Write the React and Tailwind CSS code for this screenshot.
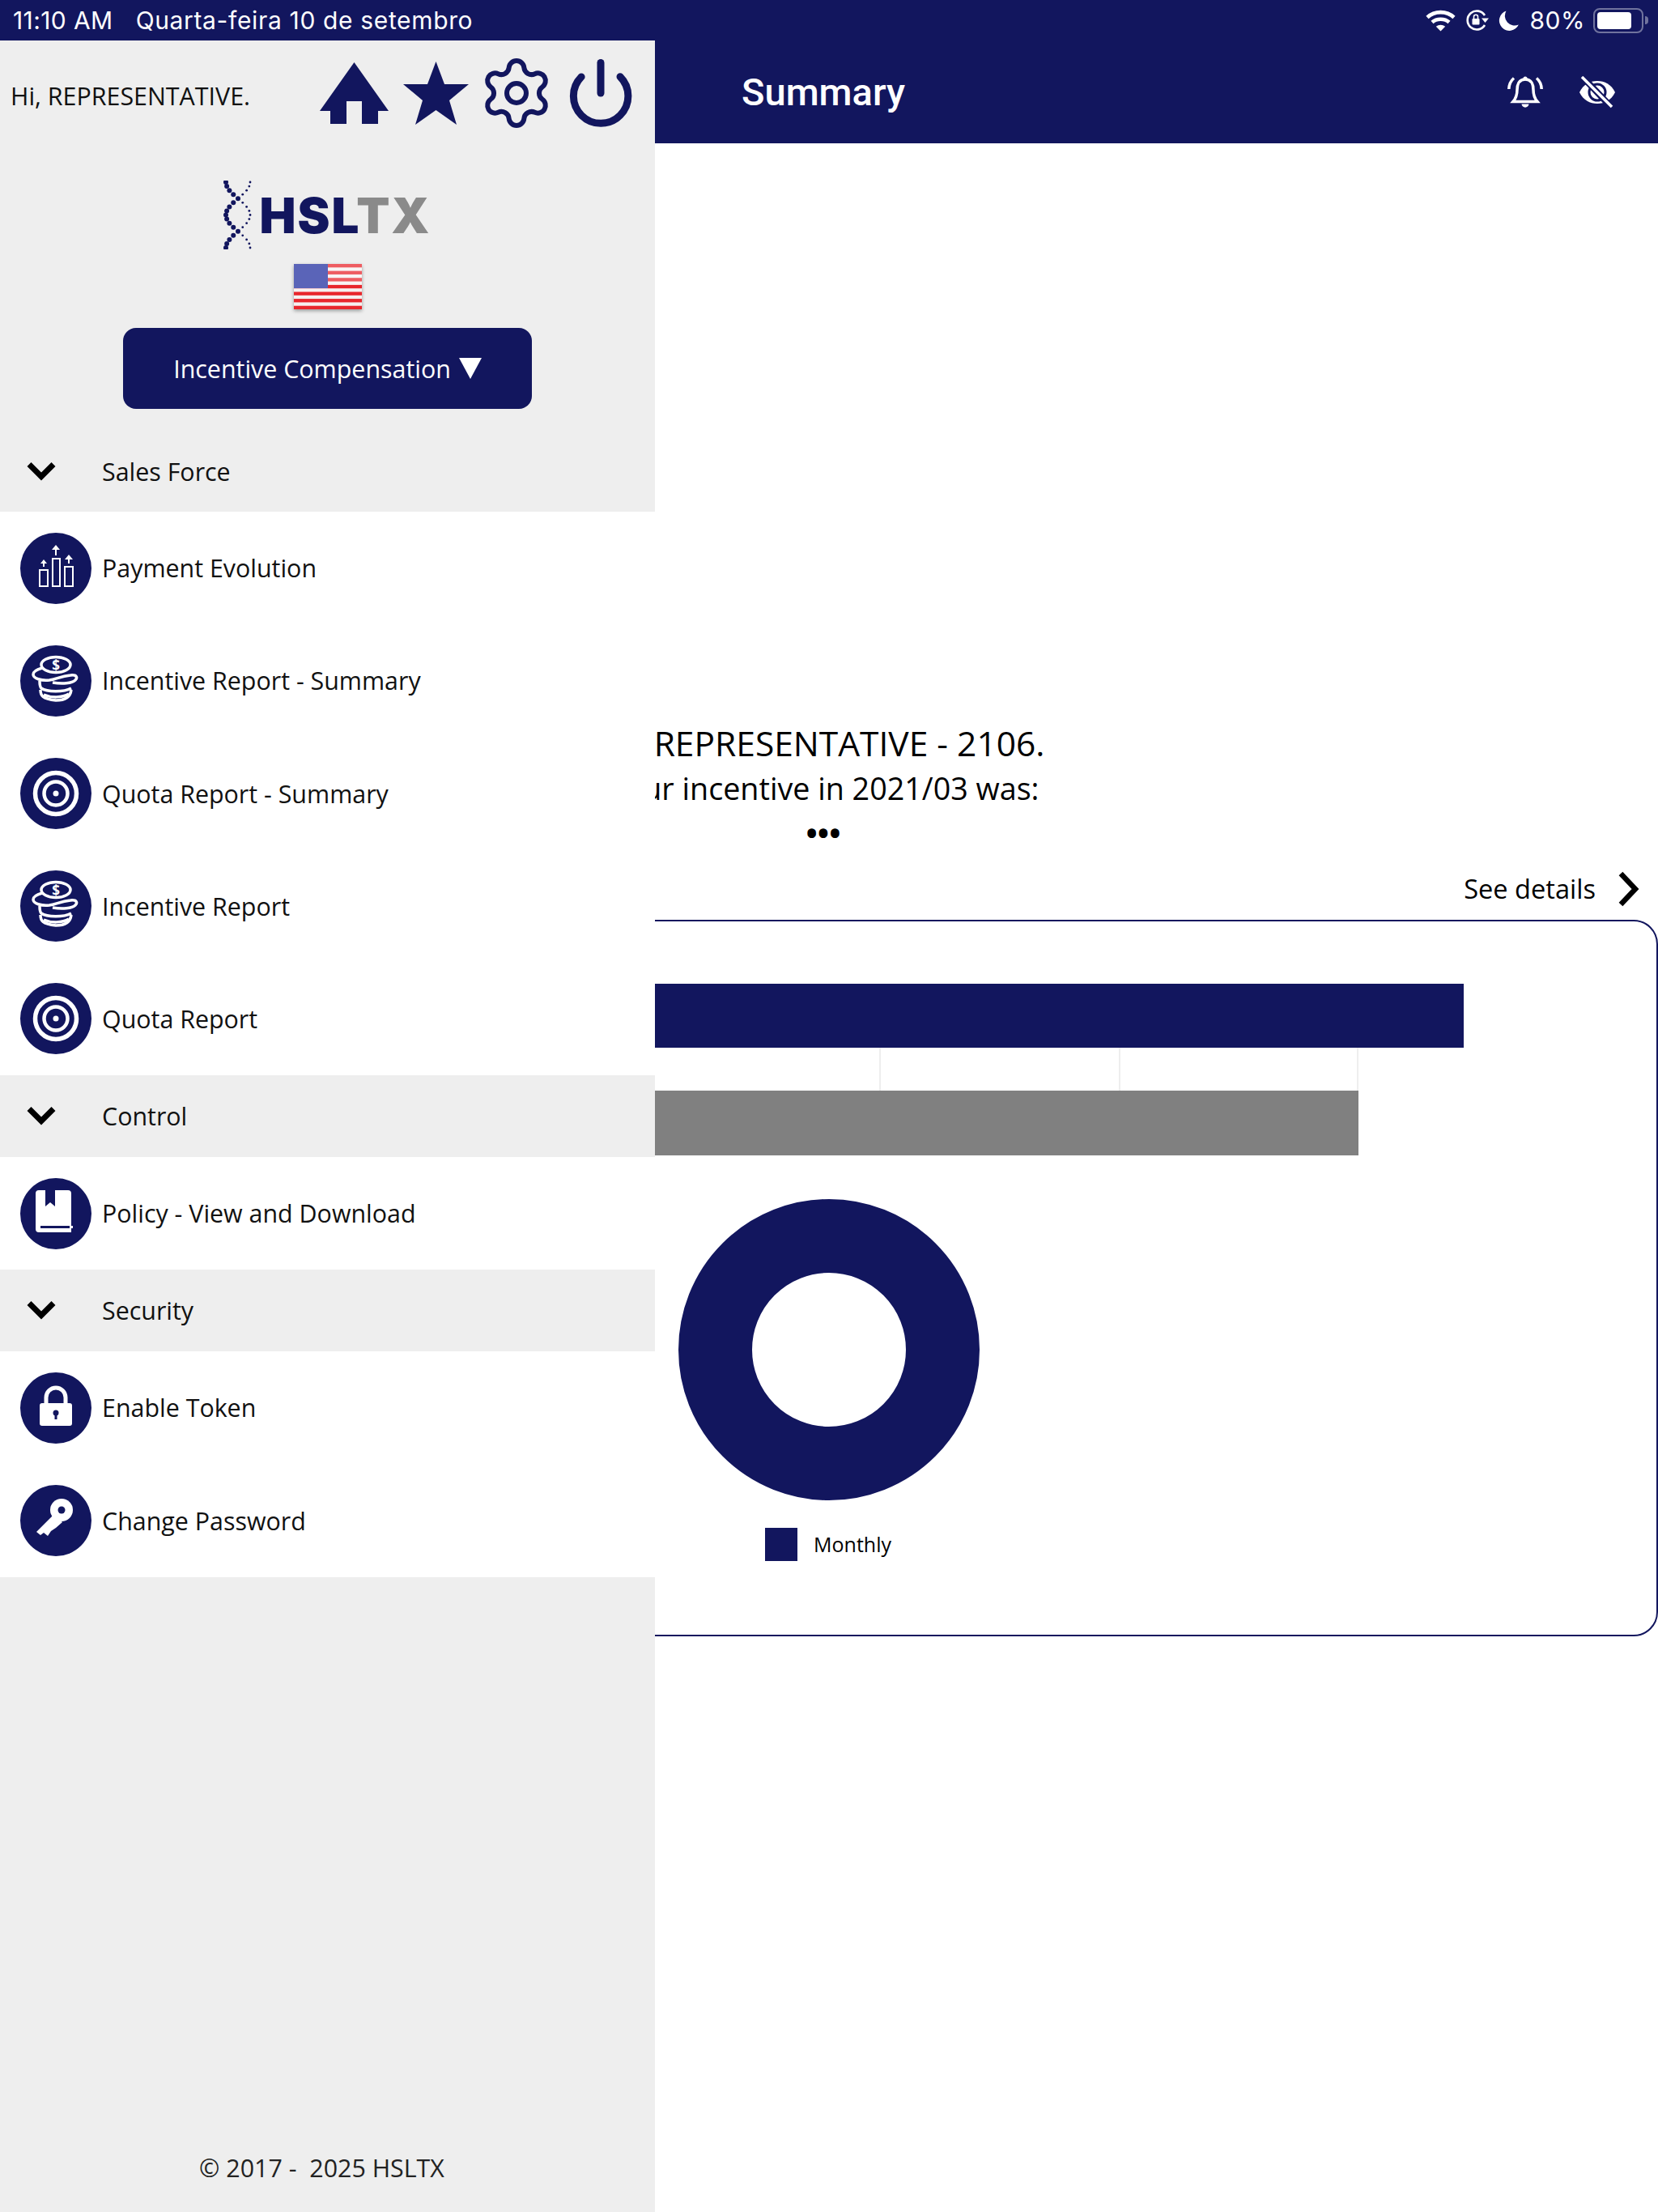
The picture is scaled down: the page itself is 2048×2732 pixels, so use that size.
import React from "react";
import { Settings, Power, ChevronDown } from "lucide-react";

const NAVY = "#12165e";

function Wifi() {
  return (
    <svg width="37" height="27" viewBox="0 0 37 27" fill="none" stroke="white" strokeWidth="4.6">
      <path d="M2 9.5C11 1 26 1 35 9.5" />
      <path d="M8 15.5C13.500 10.500 23.500 10.500 29 15.500" />
      <path d="M18.500 26.500L12.800 20.800C16 18 21 18 24.200 20.800Z" fill="white" stroke="none" />
    </svg>
  );
}

function RotationLock() {
  return (
    <svg width="30" height="26" viewBox="0 0 30 26" fill="none">
      <path d="M24 19A11.500 11.500 0 1 1 24 7" stroke="white" strokeWidth="2.600" />
      <path d="M20 10.500h9l-4.500 5.500z" fill="white" />
      <rect x="8.500" y="11" width="9" height="7.500" rx="1" fill="white" />
      <path d="M10.500 11V8.800a2.500 2.500 0 0 1 5 0V11" stroke="white" strokeWidth="1.600" />
    </svg>
  );
}

function Moon() {
  return (
    <svg width="25" height="25" viewBox="0 0 25 25">
      <path d="M9.500 0.500A12.500 12.500 0 1 0 24.800 17.500A12 12 0 0 1 9.500 0.500Z" fill="white" />
    </svg>
  );
}

function Battery() {
  return (
    <div className="flex items-center gap-[2px]">
      <div className="flex h-[31px] w-[62px] items-center rounded-[8px] border-2 border-white/40 px-[3px]">
        <div className="h-[21px] w-[42px] rounded-[4px] bg-white" />
      </div>
      <div className="h-[10px] w-[4px] rounded-r-full bg-white/40" />
    </div>
  );
}

function StatusBar() {
  return (
    <div className="flex h-[50px] items-center justify-between bg-[#12165e] pl-[16px] pr-[12px] font-['Inter',sans-serif] text-[30px] text-white">
      <div className="flex gap-[28px]">
        <span className="tracking-[0.4px]">11:10 AM</span>
        <span className="tracking-[0.65px]">Quarta-feira 10 de setembro</span>
      </div>
      <div className="flex items-center">
        <Wifi />
        <div className="ml-[12px]"><RotationLock /></div>
        <div className="ml-[11px]"><Moon /></div>
        <span className="ml-[14px] mr-[10px] tracking-[0.5px]">80%</span>
        <Battery />
      </div>
    </div>
  );
}

function BellIcon() {
  return (
    <svg width="44" height="42" viewBox="0 0 44 42" fill="none" stroke="white" strokeWidth="3.500">
      <path d="M22 5C14 5 12 12 12 18C12 25 10 29 7 32.500H37C34 29 32 25 32 18C32 12 30 5 22 5Z" />
      <path d="M17.500 35.500C18 41 26 41 26.500 35.500" fill="white" stroke="none" />
      <circle cx="22" cy="4" r="2.500" fill="white" stroke="none" />
      <path d="M1.800 17C2 11 4.500 6.500 8 3.500" />
      <path d="M42.200 17C42 11 39.500 6.500 36 3.500" />
    </svg>
  );
}

function EyeOffIcon() {
  return (
    <svg width="46" height="40" viewBox="0 0 46 40">
      <path d="M1 20C6 10 14 6 23 6C32 6 40 10 45 20C40 30 32 34 23 34C14 34 6 30 1 20Z" fill="white" />
      <circle cx="23" cy="20" r="10" fill="none" stroke={NAVY} strokeWidth="3" />
      <path d="M3 -1L41 39" stroke={NAVY} strokeWidth="8" />
      <path d="M4 1L41 38" stroke="white" strokeWidth="3.500" />
    </svg>
  );
}

function MainHeader() {
  return (
    <div className="flex h-[127px] items-center bg-[#12165e]">
      <div className="min-w-0 flex-1 pl-[52px]" />
      <h1 className="mr-[14px] mt-[2px] font-['Roboto',sans-serif] text-[47px] font-medium text-white">Summary</h1>
      <div className="flex min-w-0 flex-1 items-center justify-end gap-[44px] pr-[52px]">
        <BellIcon />
        <EyeOffIcon />
      </div>
    </div>
  );
}

function BarChart() {
  return (
    <svg className="block" width="2046" height="212" viewBox="0 0 2046 212">
      <path d="M1085 0V212M1381 0V212M1675 0V212M790 0V212" stroke="#eeeeee" strokeWidth="2" fill="none" />
      <rect x="0" y="0" width="1806" height="79" fill={NAVY} />
      <rect x="0" y="132" width="1676" height="80" fill="#808080" />
    </svg>
  );
}

function Donut() {
  return (
    <svg className="block" width="372" height="372" viewBox="0 0 372 372">
      <circle cx="186" cy="186" r="140.500" fill="none" stroke={NAVY} strokeWidth="91" />
    </svg>
  );
}

function MainContent() {
  return (
    <div className="bg-white font-['Open_Sans',sans-serif] text-black">
      <div className="flex flex-col items-center pr-[14px] pt-[714px]">
        <p className="text-[42.500px] leading-[54px]">Hi, REPRESENTATIVE - 2106.</p>
        <p className="mt-[2px] text-[37.700px] leading-[54px]">Your incentive in 2021/03 was:</p>
        <p className="h-[54px] text-[38px] font-bold leading-[54px]">•••</p>
      </div>
      <div className="mt-[15px] flex h-[56px] items-center justify-end pr-[23px]">
        <span className="mr-[27px] text-[32.600px]">See details</span>
        <svg width="27" height="44" viewBox="0 0 27 44" fill="none" stroke="black" strokeWidth="6.500">
          <path d="M4 3L22 22L4 41" />
        </svg>
      </div>
      <div className="ml-[-30px] mt-[10px] flex h-[885px] flex-col rounded-[30px] border-2 border-[#12165e] pl-[30px] pt-[77px]">
        <BarChart />
        <div className="mt-[54px] flex flex-col items-center">
          <Donut />
          <div className="mr-[2px] mt-[34px] flex items-center">
            <div className="h-[41px] w-[40px] bg-[#12165e]" />
            <span className="ml-[20px] text-[25px]">Monthly</span>
          </div>
        </div>
      </div>
    </div>
  );
}

function HomeIcon() {
  return (
    <svg width="85" height="76" viewBox="0 0 85 76" fill={NAVY}>
      <path d="M42.500 0L85 60H72V76H52V48H33V76H13V60H0Z" />
    </svg>
  );
}

function StarIcon() {
  return (
    <svg width="81" height="78" viewBox="0 0 81 78" fill={NAVY}>
      <path d="M40.500 0L51 28H81L57 48L66 78L40.500 60L15 78L24 48L0 28H30Z" />
    </svg>
  );
}

function Dna() {
  const dots = [];
  for (let i = 0; i < 17; i++) {
    const t = i / 16;
    const y = 2 + t * 81;
    const spread = 15 * Math.abs(Math.cos(t * Math.PI * 2));
    dots.push(<circle key={"a" + i} cx={18 - spread} cy={y} r={3} fill={NAVY} />);
    dots.push(<circle key={"b" + i} cx={18 + spread} cy={y} r={1.400} fill={NAVY} />);
  }
  return (
    <svg width="36" height="85" viewBox="0 0 36 85">
      {dots}
    </svg>
  );
}

function Flag() {
  const stripes = [0, 2, 4, 6, 8, 10, 12];
  return (
    <svg className="blur-[0.6px] drop-shadow-[0_2px_2px_rgba(0,0,0,0.35)]" width="84" height="56" viewBox="0 0 84 56">
      <rect width="84" height="56" fill="#f6f0f0" />
      {stripes.map((n) => (
        <rect key={n} x="0" y={n * 4.310} width="84" height="4.310" fill="#e8262c" />
      ))}
      <rect x="0" y="0" width="84" height="26" fill="white" opacity="0.25" />
      <rect x="0" y="0" width="42" height="30" fill="#5a64b8" />
    </svg>
  );
}

function Logo() {
  return (
    <div className="flex h-[85px] items-center">
      <Dna />
      <span className="ml-[8px] mt-[1px] font-['Inter',sans-serif] text-[60px] font-black leading-none tracking-[2px] text-[#12165e]">
        HSL<span className="text-[#8a8a8a]">TX</span>
      </span>
    </div>
  );
}

function IconDisc({ children }) {
  return (
    <svg className="shrink-0" width="88" height="88" viewBox="0 0 88 88">
      <circle cx="44" cy="44" r="44" fill={NAVY} />
      {children}
    </svg>
  );
}

function BarsIcon() {
  return (
    <IconDisc>
      <g fill="none" stroke="white" strokeWidth="2">
        <rect x="24" y="46" width="10" height="20" />
        <rect x="40" y="32" width="9" height="34" />
        <rect x="55" y="42" width="10" height="24" />
        <path d="M29 42V37M44 28V20M60 38V32" />
      </g>
      <path d="M29 33l4 5h-8zM44 15l5 6h-10zM60 27l5 6h-10z" fill="white" />
    </IconDisc>
  );
}

function CoinsIcon() {
  return (
    <IconDisc>
      <g fill="none" stroke="white" strokeWidth="3.500">
        <ellipse cx="44" cy="24" rx="18" ry="9.500" />
        <path d="M27 28C20 30 16 32 16 36C16 41 26 44 36 43C44 42 50 38 62 37C70 36 71 40 68 43C64 47 52 48 40 46" />
        <path d="M24 44C24 50 25 52 26 53C33 58 54 58 63 53" />
        <path d="M25 55C25 62 27 66 44 68C56 68 62 64 63 55" />
        <path d="M29 61C38 65 52 65 60 60" />
      </g>
      <text x="44" y="31" textAnchor="middle" fontFamily="Open Sans, sans-serif" fontSize="17" fontWeight="700" fill="white">$</text>
    </IconDisc>
  );
}

function TargetIcon() {
  return (
    <IconDisc>
      <circle cx="44" cy="44" r="25.500" fill="none" stroke="white" strokeWidth="5.500" />
      <circle cx="44" cy="44" r="14.500" fill="none" stroke="white" strokeWidth="4.500" />
      <circle cx="44" cy="44" r="3.500" fill="white" />
    </IconDisc>
  );
}

function BookIcon() {
  return (
    <IconDisc>
      <path d="M23 15H31V35L37 30L43 35V15H59A4 4 0 0 1 63 19V67H23A4 4 0 0 1 19 63V19A4 4 0 0 1 23 15Z" fill="white" />
      <path d="M25 60.500H63" stroke={NAVY} strokeWidth="3" />
      <path d="M61 60.500H65" stroke="white" strokeWidth="3" />
    </IconDisc>
  );
}

function LockIcon() {
  return (
    <IconDisc>
      <path d="M32 39V31a12 12 0 0 1 24 0V39" fill="none" stroke="white" strokeWidth="5" />
      <rect x="24" y="38" width="40" height="28" rx="3" fill="white" />
      <circle cx="44" cy="50" r="3.500" fill={NAVY} />
      <rect x="42.500" y="50" width="3" height="8" fill={NAVY} />
    </IconDisc>
  );
}

function KeyIcon() {
  return (
    <IconDisc>
      <path d="M42 36L20 58L25 62L29 59L34 63L38 57L44 53L52 46Z" fill="white" />
      <circle cx="51" cy="31" r="14" fill="white" />
      <circle cx="51" cy="31" r="4.500" fill={NAVY} />
    </IconDisc>
  );
}

function SectionRow({ label, className = "h-[101px]" }) {
  return (
    <div className={"flex items-center " + className}>
      <div className="flex w-[126px] justify-start pl-[21px]">
        <ChevronDown size={60} strokeWidth={2.800} strokeLinecap="butt" strokeLinejoin="miter" className="mt-[-3px] text-black" />
      </div>
      <span>{label}</span>
    </div>
  );
}

function NavRow({ icon, label }) {
  return (
    <div className="flex h-[139.200px] items-center bg-white pl-[25px]">
      {icon}
      <span className="ml-[13px] pt-[1px]">{label}</span>
    </div>
  );
}

// the drawer lies over the summary page
function Drawer() {
  return (
    <aside className="absolute bottom-0 left-0 top-[50px] flex w-[809px] flex-col bg-[#eeeeee] font-['Open_Sans',sans-serif] text-[30.400px] text-[#111111]">
      <div className="flex h-[127px] items-center pl-[13px] pr-[22px] pt-[2px]">
        <span className="mt-[8px] flex-1">Hi, REPRESENTATIVE.</span>
        <div className="flex items-center">
          <HomeIcon />
          <div className="ml-[18px]"><StarIcon /></div>
          <div className="ml-[11px]"><Settings size={96} strokeWidth={1.500} color={NAVY} /></div>
          <div className="ml-[11px]"><Power size={90} strokeWidth={2.400} color={NAVY} /></div>
        </div>
      </div>
      <div className="flex flex-col items-center pt-[46px]">
        <Logo />
        <div className="mt-[18px]"><Flag /></div>
        <div className="mt-[23px] flex h-[100px] w-[505px] items-center justify-center rounded-[16px] bg-[#12165e] text-white">
          <span className="pt-[2px]">Incentive Compensation</span>
          <svg className="ml-[10px]" width="28" height="26" viewBox="0 0 28 26" fill="white">
            <path d="M0 0H28L14 26Z" />
          </svg>
        </div>
      </div>
      <SectionRow label="Sales Force" className="h-[127px] pt-[28px]" />
      <NavRow icon={<BarsIcon />} label="Payment Evolution" />
      <NavRow icon={<CoinsIcon />} label="Incentive Report - Summary" />
      <NavRow icon={<TargetIcon />} label="Quota Report - Summary" />
      <NavRow icon={<CoinsIcon />} label="Incentive Report" />
      <NavRow icon={<TargetIcon />} label="Quota Report" />
      <SectionRow label="Control" />
      <NavRow icon={<BookIcon />} label="Policy - View and Download" />
      <SectionRow label="Security" />
      <NavRow icon={<LockIcon />} label="Enable Token" />
      <NavRow icon={<KeyIcon />} label="Change Password" />
      <div className="flex flex-1 items-end justify-center pb-[31px] pr-[14px] text-[#222222]">
        <span className="whitespace-pre">© 2017 -  2025 HSLTX</span>
      </div>
    </aside>
  );
}

export default function App() {
  return (
    <div className="relative h-[2732px] w-[2048px] overflow-hidden bg-white">
      <StatusBar />
      <MainHeader />
      <MainContent />
      <Drawer />
    </div>
  );
}
